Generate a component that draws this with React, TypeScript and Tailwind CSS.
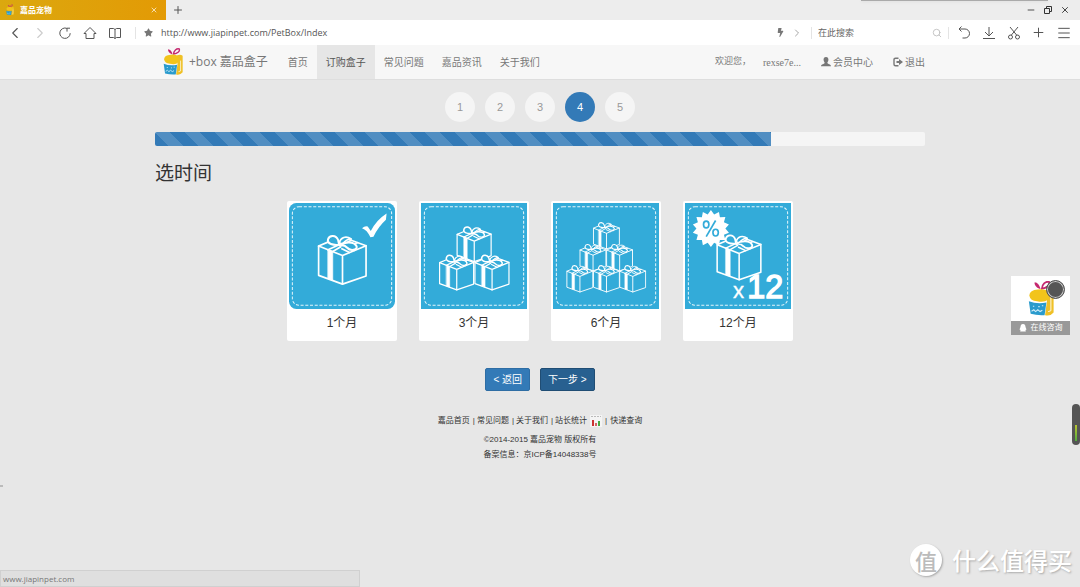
import { useState } from "react";
import type { ReactNode } from "react";
import {
  BookOpen,
  ChevronLeft,
  ChevronRight,
  Minus,
  Copy,
  Plus,
  Menu,
  Search,
  X,
} from "lucide-react";
import { FaBolt, FaStar } from "react-icons/fa";

const navItems = ["首页", "订购盒子", "常见问题", "嘉品资讯", "关于我们"];
const footerLinks = ["嘉品首页", "常见问题", "关于我们", "站长统计"];
const steps = [1, 2, 3, 4, 5];

function Logo({ className }: { className: string }) {
  return (
    <svg viewBox="0 0 58 80" className={className} aria-hidden="true">
      <path d="M27 18 C20 16 13 9 15 3 C21 3 26 10 28 18Z" fill="#c4286f" />
      <path
        d="M31 17 C31 8 39 0 47 2 C50 9 41 16 31 17Z"
        fill="none"
        stroke="#c4286f"
        strokeWidth="4"
      />
      <path d="M40 21 Q50 16 57 22 L57 70 Q50 79 38 76 L42 46Z" fill="#efc026" />
      <path d="M51 36 L51 66 L45 68" fill="none" stroke="#fff" strokeWidth="2" />
      <path
        d="M3 32 Q4 20 22 19 Q40 16 45 26 L44 41 Q38 49 20 45 Q5 44 3 32Z"
        fill="#f2c41b"
      />
      <path d="M2 45 Q20 52 41 48 L37 76 Q20 77 6 73Z" fill="#2a9bcd" />
      <path
        d="M8 67 l5 -3 4 4 5 -4 5 4 5 -3M11 56 h3M23 57 h3M31 55 h3"
        fill="none"
        stroke="#d4edf8"
        strokeWidth="2.5"
      />
    </svg>
  );
}

type GiftProps = { x: number; y: number; width: number };

function Gift({ x, y, width }: GiftProps) {
  return (
    <svg
      x={x}
      y={y}
      width={width}
      height={(width * 156) / 152}
      viewBox="0 0 152 156"
      fill="none"
      stroke="#fff"
      strokeWidth="5"
      strokeLinejoin="round"
      strokeLinecap="round"
    >
      <path d="M6 38 L77 12 L147 37 L147 127 L77 151 L6 125Z" fill="#33abd9" stroke="none" />
      <path d="M32 27 L6 38 V125 L77 151 L147 127 V37 L87 15" />
      <path d="M6 38 L77 66 L147 37 M77 66 V151" />
      <path d="M34 49 L48 54 V140 L34 135Z" fill="#fff" strokeWidth="2" />
      <path d="M34 49 L62 36 M48 54 L72 40 M98 57 L75 46 M112 51 L104 46" />
      <path d="M104 21 L86 29 M121 28 L108 33" />
      <path
        d="M67 34 C50 36 30 32 34 18 C38 4 58 4 64 20Z"
        fill="#33abd9"
        strokeWidth="6"
      />
      <path
        d="M67 28 C72 12 87 6 103 17 C92 17 83 24 77 32Z"
        fill="#33abd9"
      />
      <path
        d="M67 36 C82 25 112 23 119 39 C122 51 99 53 91 43 C84 35 76 34 67 36Z"
        fill="#33abd9"
        strokeWidth="6"
      />
    </svg>
  );
}

function PercentBadge() {
  const points = Array.from({ length: 28 }, (_, i) => {
    const r = i % 2 === 0 ? 55 : 43;
    const a = (i * Math.PI) / 14;
    return `${(77 + r * Math.sin(a)).toFixed(1)},${(76 - r * Math.cos(a)).toFixed(1)}`;
  }).join(" ");
  return (
    <g>
      <polygon points={points} fill="#fff" />
      <g fill="none" stroke="#33abd9" strokeWidth="5">
        <ellipse cx="63" cy="64" rx="8" ry="10" />
        <ellipse cx="91" cy="88" rx="8" ry="10" />
        <path d="M91 52 L63 100" />
      </g>
    </g>
  );
}

function Tile({ rounded, children }: { rounded?: boolean; children: ReactNode }) {
  return (
    <svg viewBox="0 0 315 315" className="block w-full" aria-hidden="true">
      <rect width="315" height="315" rx={rounded ? 22 : 0} fill="#33abd9" />
      <rect
        x="10"
        y="11"
        width="295"
        height="293"
        rx="20"
        fill="none"
        stroke="#e4f5fb"
        strokeWidth="3"
        strokeDasharray="9 5"
      />
      {children}
    </svg>
  );
}

const plans = [
  {
    label: "1个月",
    art: (
      <Tile rounded>
        <Gift x={82} y={90} width={152} />
        <path
          d="M217 75 Q226 67 234 70 L243 83 Q260 50 290 31 L288 50 Q266 70 251 100 L242 102 Q232 80 217 75Z"
          fill="#fff"
        />
      </Tile>
    ),
  },
  {
    label: "3个月",
    art: (
      <Tile>
        <Gift x={103} y={66} width={109} />
        <Gift x={51} y={150} width={109} />
        <Gift x={156} y={150} width={109} />
      </Tile>
    ),
  },
  {
    label: "6个月",
    art: (
      <Tile>
        <Gift x={117} y={54} width={83} />
        <Gift x={77} y={119} width={83} />
        <Gift x={156} y={119} width={83} />
        <Gift x={38} y={182} width={83} />
        <Gift x={117} y={182} width={83} />
        <Gift x={195} y={182} width={83} />
      </Tile>
    ),
  },
  {
    label: "12个月",
    art: (
      <Tile>
        <Gift x={90} y={89} width={140} />
        <PercentBadge />
        <g fill="#fff" fontFamily="Liberation Sans, Arial, sans-serif">
          <text x="143" y="281" fontSize="66" stroke="#fff">x</text>
          <text x="185" y="281" fontSize="96" stroke="#fff" strokeWidth="4">12</text>
        </g>
      </Tile>
    ),
  },
];

function ToolButton({ label, children }: { label: string; children: ReactNode }) {
  return (
    <button aria-label={label} className="flex w-[25px] items-center justify-center">
      {children}
    </button>
  );
}

function LineIcon({ children }: { children: ReactNode }) {
  return (
    <svg viewBox="0 0 14 14" className="size-3.5" fill="none" stroke="currentColor" strokeWidth="1">
      {children}
    </svg>
  );
}

function BrowserChrome() {
  return (
    <header className="font-['Open_Sans','Noto_Sans_CJK_SC',sans-serif] text-[#555]">
      <div className="relative flex h-5 items-center justify-between bg-[#ededed]">
        <div className="flex h-full items-center">
          <div className="flex h-full w-[166px] items-center bg-linear-to-r from-[#dba80f] to-[#e39a05] pl-1.5 pr-2 text-white">
            <Logo className="h-3 w-2" />
            <span className="ml-1.5 flex-1 text-[8px] font-bold">嘉品宠物</span>
            <button aria-label="关闭标签页">
              <X size={8} strokeWidth={2} />
            </button>
          </div>
          <button aria-label="新标签页" className="ml-1.5">
            <Plus size={12} strokeWidth={2} />
          </button>
        </div>
        <div className="absolute right-8 top-0 h-px w-[187px] bg-[#aaa] shadow-sm" />
        <div className="mr-2.5 flex items-center gap-2 text-[#333]">
          <button aria-label="最小化"><Minus size={10} strokeWidth={2} /></button>
          <button aria-label="还原">
            <svg viewBox="0 0 8 8" className="size-2" fill="none" stroke="currentColor">
              <path d="M0.500 2.500 H5.500 V7.500 H0.500Z M2.500 2.500 V0.500 H7.500 V5.500 H5.500" />
            </svg>
          </button>
          <button aria-label="关闭"><X size={10} strokeWidth={2.2} /></button>
        </div>
      </div>

      <div className="flex h-[25px] items-center bg-white pl-0.5 pr-1">
        <ToolButton label="后退"><ChevronLeft size={18} strokeWidth={1.5} /></ToolButton>
        <ToolButton label="前进"><ChevronRight size={18} strokeWidth={1.5} className="text-[#ccc]" /></ToolButton>
        <ToolButton label="刷新">
          <LineIcon>
            <path d="M9 2.400 A5.200 5.200 0 1 0 12.200 7.200 M9 5.600 V2.200 H12" />
          </LineIcon>
        </ToolButton>
        <ToolButton label="主页">
          <LineIcon>
            <path d="M1 7.500 L7 1.500 L13 7.500 H11 V12.500 H3 V7.500Z" />
          </LineIcon>
        </ToolButton>
        <ToolButton label="收藏">
          <LineIcon>
            <path d="M1.500 2.500 H5.500 L7 3.500 L8.500 2.500 H12.500 V11.500 H8.500 L7 12.500 L5.500 11.500 H1.500Z M7 3.500 V12.500" />
          </LineIcon>
        </ToolButton>
        <span className="mx-2 h-3 w-px bg-[#e4e4e4]" />
        <FaStar size={9} className="text-[#777]" />
        <input
          aria-label="网址"
          defaultValue="http://www.jiapinpet.com/PetBox/Index"
          className="ml-2 min-w-0 flex-1 text-[9px] outline-none"
        />
        <button aria-label="极速模式"><FaBolt size={9} className="text-[#777]" /></button>
        <button aria-label="更多" className="ml-1.5"><ChevronRight size={12} strokeWidth={1.5} className="text-[#888]" /></button>
        <span className="ml-2 mr-1.5 h-3 w-px bg-[#e4e4e4]" />
        <input
          aria-label="搜索"
          placeholder="在此搜索"
          className="w-[114px] text-[9px] outline-none placeholder:text-[#666]"
        />
        <Search size={10} strokeWidth={2} className="text-[#bbb]" />
        <span className="ml-1.5 mr-0.5 h-3 w-px bg-[#e4e4e4]" />
        <ToolButton label="撤销">
          <LineIcon>
            <path d="M2 3 H8 A4.500 4.500 0 0 1 8 12 H5.500 M4.500 0.500 L2 3 L4.500 5.500" />
          </LineIcon>
        </ToolButton>
        <ToolButton label="下载">
          <LineIcon>
            <path d="M7 1 V10 M3 6 L7 10 L11 6 M1 12.500 H13" />
          </LineIcon>
        </ToolButton>
        <ToolButton label="截图">
          <LineIcon>
            <path d="M3 1 L10 9.500 M11 1 L4 9.500" />
            <circle cx="3.500" cy="11" r="2" />
            <circle cx="10.500" cy="11" r="2" />
          </LineIcon>
        </ToolButton>
        <ToolButton label="添加"><Plus size={15} strokeWidth={1.6} /></ToolButton>
        <ToolButton label="菜单"><Menu size={16} strokeWidth={1.5} /></ToolButton>
      </div>
    </header>
  );
}

function SiteNav() {
  return (
    <nav className="border-b border-[#dedede] bg-[#f7f7f7] text-[10px] text-[#777]">
      <div className="mx-auto flex h-[34px] max-w-[770px] items-stretch justify-between">
        <div className="flex">
          <a href="#home" className="mr-[11px] flex items-center pl-2">
            <Logo className="h-7 w-5" />
            <span className="ml-1.5 font-['Open_Sans','Noto_Sans_CJK_SC',sans-serif] text-[12px]">
              +box 嘉品盒子
            </span>
          </a>
          {navItems.map((item) => (
            <a
              key={item}
              href="#nav"
              className={
                item === "订购盒子"
                  ? "flex items-center bg-[#e6e6e6] px-[9px] text-[#555]"
                  : "flex items-center px-[9px]"
              }
            >
              {item}
            </a>
          ))}
        </div>
        <div className="flex items-center">
          <span className="text-[9px]">欢迎您，</span>
          <a href="#user" className="ml-3 font-['Liberation_Serif',serif]">
            rexse7e...
          </a>
          <a href="#member" className="ml-5 flex items-center gap-0.5">
            <svg viewBox="0 0 10 10" className="size-2.5" fill="currentColor" aria-hidden="true">
              <path d="M5 0 C7 0 7.600 1.500 7.400 3 C7.200 4.600 6.500 5 6.300 6 C6.500 7 10 7 10 9.300 H0 C0 7 3.500 7 3.700 6 C3.500 5 2.800 4.600 2.600 3 C2.400 1.500 3 0 5 0Z" />
            </svg>
            会员中心
          </a>
          <a href="#logout" className="ml-5 flex items-center gap-0.5">
            <svg viewBox="0 0 10 10" className="size-2.5" aria-hidden="true">
              <path
                d="M5.500 1.200 H2.500 Q1 1.200 1 2.700 V7.300 Q1 8.800 2.500 8.800 H5.500"
                fill="none"
                stroke="currentColor"
                strokeWidth="1.400"
              />
              <path d="M3.500 4 H6 V2 L10 5 L6 8 V6 H3.500Z" fill="currentColor" />
            </svg>
            退出
          </a>
        </div>
      </div>
    </nav>
  );
}

export default function App() {
  const [selected, setSelected] = useState("1个月");

  return (
    <div className="relative min-h-screen overflow-hidden bg-[#e7e7e7] font-['Liberation_Sans','Noto_Sans_CJK_SC',sans-serif] text-[#333]">
      <BrowserChrome />
      <SiteNav />

      <main className="mx-auto max-w-[770px] pt-3">
        <ol className="flex justify-center gap-2.5 text-[11px]">
          {steps.map((step) => (
            <li
              key={step}
              className={
                step === 4
                  ? "flex size-[30px] items-center justify-center rounded-full bg-[#337ab7] text-white"
                  : "flex size-[30px] items-center justify-center rounded-full bg-[#f5f5f5] text-[#999]"
              }
            >
              {step}
            </li>
          ))}
        </ol>

        <div className="mt-2.5 h-[14px] overflow-hidden rounded-xs bg-[#f5f5f5]">
          <div className="h-full w-4/5 bg-[#337ab7] bg-[linear-gradient(45deg,rgba(255,255,255,.15)_25%,transparent_25%,transparent_50%,rgba(255,255,255,.15)_50%,rgba(255,255,255,.15)_75%,transparent_75%,transparent)] bg-size-[30px_30px]" />
        </div>

        <h1 className="mt-3.5 text-[19px] leading-7">选时间</h1>

        <div className="mt-[13px] flex flex-wrap justify-center gap-[22px]">
          {plans.map((plan) => (
            <button
              key={plan.label}
              aria-pressed={selected === plan.label}
              onClick={() => setSelected(plan.label)}
              className="flex h-[140px] w-[110px] flex-col rounded-xs bg-white p-0.5"
            >
              {plan.art}
              <span className="mt-1 w-full text-center text-[12px] leading-5">
                {plan.label}
              </span>
            </button>
          ))}
        </div>

        <div className="mt-[27px] flex justify-center gap-2.5 text-[10px] text-white">
          <button className="h-[23px] rounded-xs border border-[#2e6da4] bg-[#337ab7] px-[7px]">
            &lt; 返回
          </button>
          <button className="h-[23px] rounded-xs border border-[#204d74] bg-[#286090] px-[7px]">
            下一步 &gt;
          </button>
        </div>
      </main>

      <footer className="mt-[22px] text-center text-[8px] leading-[15px]">
        <p className="mb-1 flex items-center justify-center gap-[3px]">
          {footerLinks.map((link, i) => (
            <span key={link} className="flex gap-0.5">
              {i > 0 && <span>|</span>}
              <a href="#footer">{link}</a>
            </span>
          ))}
          <svg viewBox="0 0 12 12" className="size-3" aria-hidden="true">
            <rect width="12" height="12" fill="#f4f4f4" />
            <path d="M1 1.500 H11" stroke="#bbb" strokeDasharray="2 1" />
            <path d="M3 5 V11" stroke="#c33" strokeWidth="2" />
            <path d="M6 8 V11" stroke="#c33" strokeWidth="1.500" />
            <path d="M9 6 V11" stroke="#4a4" strokeWidth="2" />
          </svg>
          <span>|</span>
          <a href="#express">快递查询</a>
        </p>
        <p>©2014-2015 嘉品宠物 版权所有</p>
        <p>备案信息：京ICP备14048338号</p>
      </footer>

      <a href="#chat" className="absolute right-[10px] top-[276px] block w-[59px] bg-white">
        <span className="flex h-[45px] items-center justify-center">
          <Logo className="h-9 w-7" />
        </span>
        <span className="flex h-[14px] items-center justify-center gap-1 bg-[#999] text-[8px] text-white">
          <svg viewBox="0 0 8 8" className="size-2" fill="#fff" aria-hidden="true">
            <path d="M4 0 C6 0 6.500 1.500 6.500 3 L7.500 5.500 L6.500 6 L6.800 7.600 H1.200 L1.500 6 L0.500 5.500 L1.500 3 C1.500 1.500 2 0 4 0Z" />
          </svg>
          在线咨询
        </span>
        <span className="absolute right-[5px] top-1 size-[19px] rounded-full border border-[#555] bg-[#555] ring-1 ring-inset ring-[#ccc]" />
      </a>

      <div className="absolute right-0 top-[404px] flex h-[41px] w-2 items-end justify-center rounded-full bg-[#555] pb-1">
        <span className="h-4 w-0.5 bg-linear-to-b from-[#b8c430] to-[#4fae3c]" />
      </div>

      <div className="absolute left-0 top-[485px] h-0.5 w-[3px] bg-[#bbb]" />

      <div className="absolute bottom-[11px] right-2 flex items-center gap-2.5 font-['Noto_Sans_CJK_SC',sans-serif] font-medium text-white">
        <span className="flex size-8 items-center justify-center rounded-full bg-white text-[22px] text-[#bbb] shadow-[1px_1px_2px_#aaa]">
          值
        </span>
        <span className="text-[24px] leading-8 text-shadow-[1px_1px_2px_#aaa]">什么值得买</span>
      </div>

      <div className="absolute bottom-0 left-0 h-[17px] w-1/3 border border-[#d0d0d0] bg-[#dfdfdf] pl-0.5 font-['Open_Sans',sans-serif] text-[8px] leading-[15px] text-[#777]">
        www.jiapinpet.com
      </div>
    </div>
  );
}
